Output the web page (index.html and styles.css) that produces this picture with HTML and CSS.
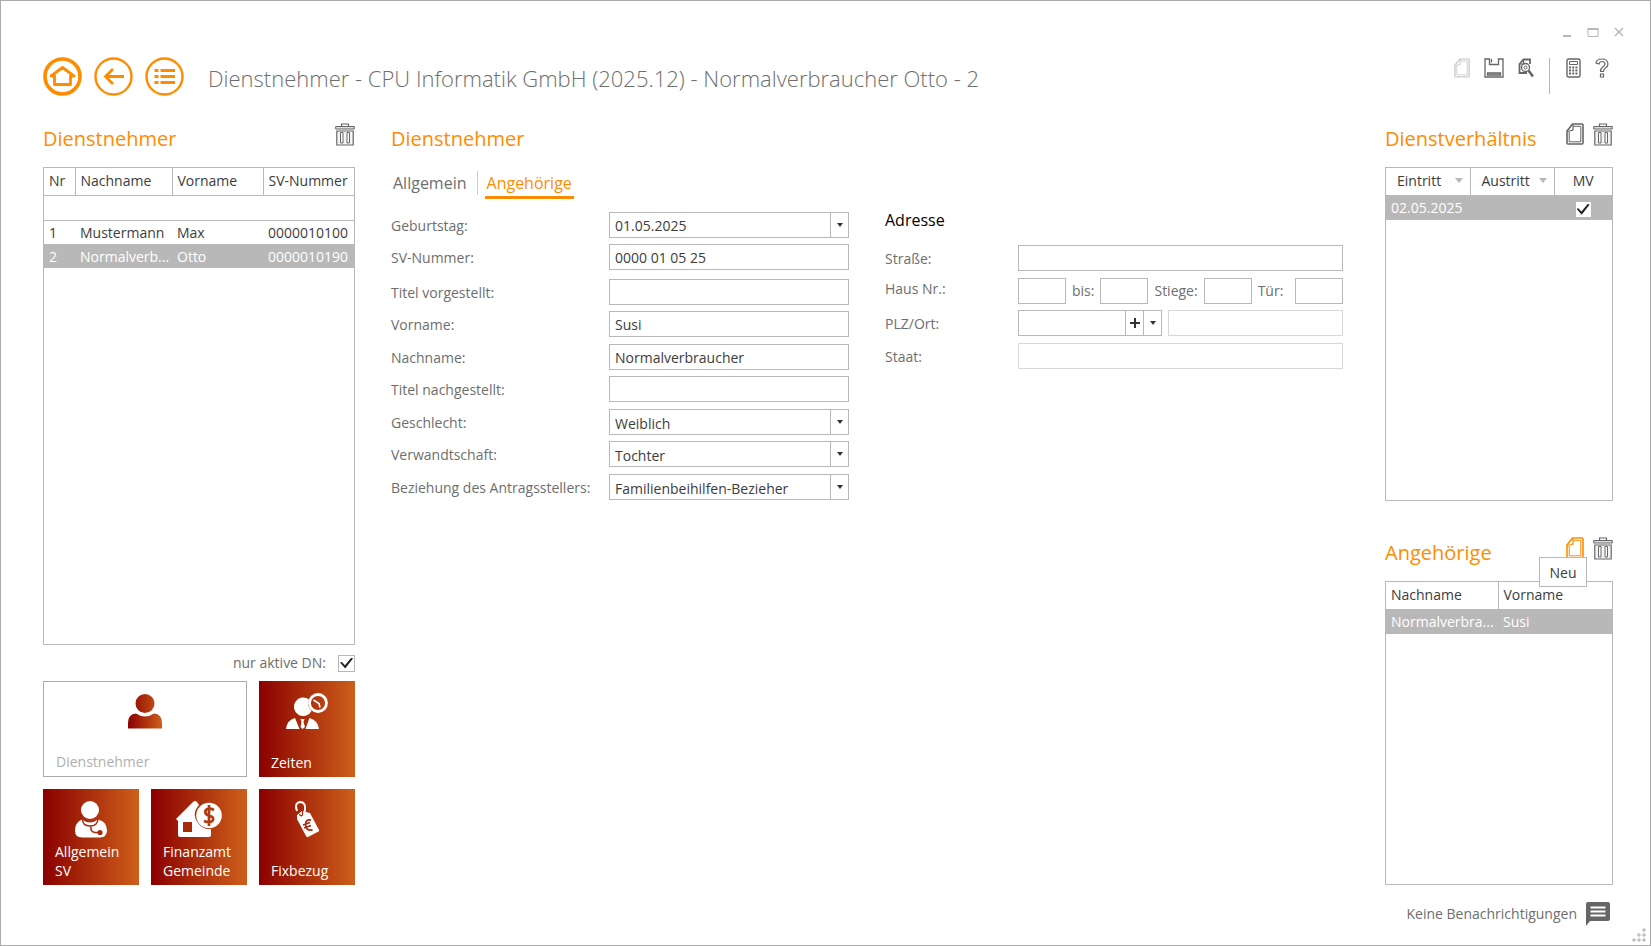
FILE: index.html
```html
<!DOCTYPE html>
<html lang="de">
<head>
<meta charset="utf-8">
<title>Dienstnehmer - CPU Informatik GmbH</title>
<link rel="stylesheet" href="styles.css">
</head>
<body>
<svg class="defs" aria-hidden="true">
  <defs>
    <linearGradient id="brand" x1="0" x2="1" y1="0" y2="0"><stop offset="0" stop-color="#8b0000"/><stop offset="1" stop-color="#cd5f1a"/></linearGradient>
    <symbol id="trash" viewBox="0 0 20 23">
      <g fill="none" stroke="currentColor"><path d="M6.500 3V1h7v2" stroke-width="1.200"/><path d="M.7 3.500h18.600v2.500H.7z" fill="#ddd"/><path d="M1.800 8h16.400v14H1.800z" fill="#f4f4f4" stroke-width="1.200"/><path d="M5.500 9.500h2.500v10.500H5.500zM12 9.500h2.500v10.500h-2.500z" fill="#fff"/></g>
    </symbol>
    <symbol id="page" viewBox="0 0 18 22">
      <path d="M6.500 1H16q1 0 1 1v18q0 1-1 1H2q-1 0-1-1V8z" fill="none" stroke="currentColor" stroke-width="1.600"/>
      <path d="M7 3.300h7.800v15.500H3.200V9" fill="none" stroke="currentColor" stroke-width="1"/><path d="M7 1.500V7L1.500 8.500" fill="none" stroke="currentColor" stroke-width="1.200"/>
    </symbol>
  </defs>
</svg>
<div class="window">
  <div class="caption">
    <button aria-label="Minimieren"><svg width="10" height="14"><path d="M1 11h8" stroke="#b8b8b8" stroke-width="2"/></svg></button>
    <button aria-label="Maximieren"><svg width="12" height="14"><path d="M1 3.500h10v8H1z" fill="none" stroke="#b8b8b8"/><path d="M.5 4h11" stroke="#b8b8b8" stroke-width="2"/></svg></button>
    <button aria-label="Schließen"><svg width="10" height="14"><path d="M1 3l8 8M9 3l-8 8" stroke="#b8b8b8" stroke-width="1.500"/></svg></button>
  </div>
  <header class="topbar">
    <nav class="nav">
      <button aria-label="Start"><svg width="39" height="39" fill="none" stroke="#ff8c00"><circle cx="19.500" cy="19.500" r="17.500" stroke-width="3.600"/><path d="M8 19l11.500-8.500L31 19h-3.500v8.500h-16V19z" stroke-width="2.800" stroke-linejoin="round"/></svg></button>
      <button aria-label="Zurück"><svg width="39" height="39" fill="none" stroke="#ff8c00"><circle cx="19.500" cy="19.500" r="18" stroke-width="2.400"/><path d="M30 19.500H12M19 12l-7.500 7.500L19 27" stroke-width="2.800"/></svg></button>
      <button aria-label="Liste"><svg width="39" height="39" fill="none" stroke="#ff8c00"><circle cx="19.500" cy="19.500" r="18" stroke-width="2.400"/><path d="M9.500 13.500h4m2 0H30M9.500 19.500h4m2 0H30M9.500 25.500h4m2 0H30" stroke-width="2.800"/></svg></button>
    </nav>
    <h1>Dienstnehmer - CPU Informatik GmbH (2025.12) - Normalverbraucher Otto - 2</h1>
    <div class="tools">
      <button class="pale" aria-label="Neu" disabled><svg width="16" height="20"><use href="#page"/></svg></button>
      <button aria-label="Speichern"><svg width="20" height="20" fill="none" stroke="currentColor" stroke-width="1.300"><path d="M1 1h4.500v5.500h9V1H19v18H1z"/><path d="M7.500 1v3.500M3.500 15h13v2h-13z" fill="#ccc"/></svg></button>
      <button aria-label="Vorschau"><svg width="16" height="20" fill="none" stroke="currentColor"><path d="M9 15H1.500V6L5.500 1.500H12V6" stroke-width="1.800"/><path d="M5.500 1.500V6H1.500" stroke-width="1.200"/><circle cx="7.500" cy="9.500" r="4" stroke-width="1.300"/><circle cx="7.500" cy="9.500" r="1.500"/><path d="M10.500 12.500l4.500 6" stroke-width="2.600"/></svg></button>
      <span class="rule"></span>
      <button aria-label="Rechner"><svg width="15" height="20" fill="none" stroke="currentColor"><rect x="1" y="1" width="13" height="18" rx="1.500" stroke-width="1.400"/><path d="M3.500 3.500h8v3h-8z"/><path d="M3 9.500h9M3 12.500h9M3 15.500h9" stroke-width="2" stroke-dasharray="2 1.200"/></svg></button>
      <button aria-label="Hilfe"><svg width="14" height="20" fill="none" stroke="currentColor" stroke-width="1.200"><path d="M1 5Q1.500 1 7 1t6 5q0 2.500-3 4.500-1.500 1-1.500 3h-3q0-3 2.500-4.800Q10 7.500 10 6q0-2.500-3-2.500-2.500 0-3 2.500zM5.500 16h3v3h-3z"/></svg></button>
    </div>
  </header>
  <main class="columns">
    <section class="left">
      <div class="head"><h2>Dienstnehmer</h2><button class="icon" aria-label="Löschen"><svg width="20" height="23"><use href="#trash"/></svg></button></div>
      <div class="grid staff">
        <table>
          <colgroup><col class="nr"><col class="nach"><col class="vor"><col></colgroup>
          <thead><tr><th>Nr</th><th>Nachname</th><th>Vorname</th><th>SV-Nummer</th></tr></thead>
          <tbody><tr class="filter"><td colspan="4"></td></tr>
          <tr><td>1</td><td>Mustermann</td><td>Max</td><td>0000010100</td></tr>
          <tr class="selected"><td>2</td><td>Normalverb...</td><td>Otto</td><td>0000010190</td></tr></tbody>
        </table>
      </div>
      <div class="active"><label for="aktiv">nur aktive DN:</label><input class="check" type="checkbox" id="aktiv" checked></div>
      <div class="tiles">
        <button class="tile wide"><svg width="34" height="35" fill="url(#brand)"><path d="M17 0a9.500 9.500 0 0 1 0 19a9.500 9.500 0 0 1 0-19zM0 34.500V29q0-9 8-9.500 9 6 18 0 8 .5 8 9.500v5.500z"/></svg><span>Dienstnehmer</span></button>
        <button class="tile"><svg width="42" height="37" fill="#fff"><path d="M23 6.500A9.300 9.300 0 1 0 25.500 18A11 11 0 0 1 23 6.500z"/><circle cx="32" cy="10" r="8.500" fill="none" stroke="#fff" stroke-width="2.800"/><path d="M27.500 7l5.500 3.500 1 4" fill="none" stroke="#fff" stroke-width="1.600"/><path d="M0 36q1-9 9-11l4.500 11zM23.500 25q8 2 9.500 11H19.500zM14.500 26h4l-1 3 1.500 5-2.500 2-2-2 1-5z"/></svg><span>Zeiten</span></button>
        <button class="tile"><svg width="34" height="37" fill="#fff"><circle cx="16" cy="9" r="9"/><path d="M8 18.500q8 6 16 0 9 2 9 11 0 6.500-7 7H8q-7 0-7-7 0-8 7-11z"/><path d="M8.500 18q0 7 7.500 7t8-7M17 25q-1 6 4 6.500h4" fill="none" stroke="#a52b0c" stroke-width="1.500"/><circle cx="26" cy="31.500" r="2.600" fill="#a52b0c"/></svg><span>Allgemein<br>SV</span></button>
        <button class="tile"><svg width="46" height="37" fill="#fff"><path d="M0 18L17 1q2-2 4 0l2 3q-8 9-1 18 5 7 13 6v6q0 2-2 2H4q-2 0-2-2V20z"/><path d="M7 21h9v10H7z" fill="#a52b0c"/><circle cx="33" cy="14.500" r="12.800"/><path d="M38 9q-4-2-7-1-3 2-1 5 1 1 4 2 4 1 3 4-2 4-9 1M33 4v21" fill="none" stroke="#b13a0f" stroke-width="2.700"/></svg><span>Finanzamt<br>Gemeinde</span></button>
        <button class="tile"><svg width="28" height="37"><path d="M4 10Q1 2 7 1q6 0 5 8-1 5-4 5" fill="none" stroke="#fff" stroke-width="2"/><path d="M4 14l5-4 8 2 9 17q.5 1-.5 1.500L15 36q-1.500.5-2-1L4 18z" fill="#fff"/><path d="M6.500 13q1 3 3 1V10" fill="none" stroke="#a52b0c" stroke-width="1.200"/><path d="M18 19q-5-1-5.500 4 0 7 7 6M10 24l7-2.500M11 27l7-2.500" fill="none" stroke="#a52b0c" stroke-width="1.800"/></svg><span>Fixbezug</span></button>
      </div>
    </section>
    <section class="center">
      <div class="head"><h2>Dienstnehmer</h2></div>
      <div class="tabs"><button>Allgemein</button><button class="current">Angehörige</button></div>
      <form class="forms">
        <div class="person">
          <div class="field"><label for="geb">Geburtstag:</label><div class="combo"><input id="geb" type="text" value="01.05.2025"><button type="button" class="drop" aria-label="Kalender"></button></div></div>
          <div class="field last-id"><label for="sv">SV-Nummer:</label><input id="sv" type="text" value="0000 01 05 25"></div>
          <div class="field"><label for="tv">Titel vorgestellt:</label><input id="tv" type="text"></div>
          <div class="field"><label for="vn">Vorname:</label><input id="vn" type="text" value="Susi"></div>
          <div class="field"><label for="nn">Nachname:</label><input id="nn" type="text" value="Normalverbraucher"></div>
          <div class="field"><label for="tn">Titel nachgestellt:</label><input id="tn" type="text"></div>
          <div class="field"><label for="ge">Geschlecht:</label><div class="combo"><select id="ge"><option>Weiblich</option></select><i class="drop"></i></div></div>
          <div class="field"><label for="ve">Verwandtschaft:</label><div class="combo"><select id="ve"><option>Tochter</option></select><i class="drop"></i></div></div>
          <div class="field"><label for="be">Beziehung des Antragsstellers:</label><div class="combo"><select id="be"><option>Familienbeihilfen-Bezieher</option></select><i class="drop"></i></div></div>
        </div>
        <div class="address">
          <h3>Adresse</h3>
          <div class="field"><label for="st">Straße:</label><input id="st" type="text"></div>
          <div class="field house"><label for="hn">Haus Nr.:</label><div class="numbers"><input id="hn" type="text"><label for="bis">bis:</label><input id="bis" type="text"><label for="sg">Stiege:</label><input id="sg" type="text"><label for="tu" class="door">Tür:</label><input id="tu" type="text"></div></div>
          <div class="field"><label for="plz">PLZ/Ort:</label><div class="place"><div class="combo"><input id="plz" type="text"><button type="button" class="plus" aria-label="Hinzufügen"><svg width="10" height="10"><path d="M0 5h10M5 0v10" stroke="#333" stroke-width="2"/></svg></button><button type="button" class="drop" aria-label="Auswählen"></button></div><input type="text" aria-label="Ort" disabled></div></div>
          <div class="field"><label for="sa">Staat:</label><input id="sa" type="text" disabled></div>
        </div>
      </form>
    </section>
    <aside class="right">
      <div class="head"><h2>Dienstverhältnis</h2><div class="actions"><button class="icon" aria-label="Neu"><svg width="18" height="22"><use href="#page"/></svg></button><button class="icon" aria-label="Löschen"><svg width="20" height="23"><use href="#trash"/></svg></button></div></div>
      <div class="grid jobs">
        <table>
          <colgroup><col class="date"><col class="date"><col></colgroup>
          <thead><tr><th class="sort">Eintritt<i></i></th><th class="sort">Austritt<i></i></th><th class="mid">MV</th></tr></thead>
          <tbody><tr class="selected"><td>02.05.2025</td><td></td><td class="mid"><input class="check plain" type="checkbox" aria-label="MV" checked></td></tr></tbody>
        </table>
      </div>
      <div class="head"><h2>Angehörige</h2><div class="actions"><button class="icon hot" aria-label="Neu"><svg width="18" height="22"><use href="#page"/></svg></button><button class="icon" aria-label="Löschen"><svg width="20" height="23"><use href="#trash"/></svg></button><span class="tip" role="tooltip">Neu</span></div></div>
      <div class="grid family">
        <table>
          <colgroup><col class="half"><col></colgroup>
          <thead><tr><th>Nachname</th><th>Vorname</th></tr></thead>
          <tbody><tr class="selected"><td>Normalverbra...</td><td>Susi</td></tr></tbody>
        </table>
      </div>
    </aside>
  </main>
  <footer><span>Keine Benachrichtigungen</span><button aria-label="Benachrichtigungen"><svg width="24" height="24"><path d="M2 0h20q2 0 2 2v15q0 2-2 2H4l-4 5V2q0-2 2-2z" fill="#666"/><path d="M4.500 5.500h15M4.500 9.500h15M4.500 13.500h15" stroke="#fff" stroke-width="2"/></svg></button></footer>
  <svg class="grip" width="14" height="14"><path d="M10 2h4M12 0v4M5 7h4M7 5v4M10 7h4M12 5v4M0 12h4M2 10v4M5 12h4M7 10v4M10 12h4M12 10v4" stroke="#aaa"/></svg>
</div>
</body>
</html>
```

FILE: styles.css
```css
* { box-sizing: border-box; }
body { margin: 0; font: 14px/20px "Open Sans", "Noto Sans", sans-serif; color: #3c3c3c; background: #fff; }
button, input, select { font: inherit; color: inherit; }
button { border: 0; padding: 0; background: none; display: block; }
svg { display: block; }
h1, h2, h3 { margin: 0; font-weight: 400; }
.defs { position: absolute; width: 0; height: 0; }
.window { position: relative; min-height: 100vh; border: 1px solid #aaa; display: flex; flex-direction: column; }

.caption { display: flex; align-items: flex-start; justify-content: flex-end; gap: 15px; padding: 24px 26px 0 0; height: 54px; }
.topbar { display: flex; align-items: flex-start; padding: 2px 41px 0 42px; height: 64px; }
.nav { display: flex; gap: 12px; }
h1 { flex: 1; margin-left: 24px; font-size: 22px; line-height: 42px; font-weight: 300; color: #6e6e6e; white-space: nowrap; }
.tools { display: flex; align-items: flex-start; gap: 14px; padding-top: 1px; color: #666; }
.tools .pale { color: #ccc; }
.rule { width: 1px; height: 36px; margin: 0 2px 0 1px; background: #b8b8b8; }

.columns { flex: 1; display: grid; grid-template-columns: 312px minmax(0, 1fr) 228px; padding: 0 37px 0 42px; }
.left, .right { display: flex; flex-direction: column; }
.head { display: flex; justify-content: space-between; height: 48px; flex: none; }
h2 { font-size: 20px; line-height: 40px; color: #ff8c00; white-space: nowrap; }
.icon { color: #666; }
.icon.hot { color: #ff8c00; }
.actions { position: relative; display: flex; align-items: flex-start; gap: 9px; padding-top: 4px; }
.left .head > .icon { align-self: flex-start; padding-top: 4px; }

.grid { border: 1px solid #b8b8b8; }
.staff { flex: 1; }
.jobs { height: 334px; margin-bottom: 32px; }
.right .family { flex: 1; }
table { width: 100%; border-collapse: collapse; table-layout: fixed; }
.nr { width: 31px; }
.nach { width: 97px; }
.vor { width: 91px; }
.date { width: 84px; }
.half { width: 112px; }
th, td { padding: 0 5px; text-align: left; font-weight: 400; white-space: nowrap; overflow: hidden; }
th { height: 27px; border-bottom: 1px solid #b8b8b8; }
th + th { border-left: 1px solid #b8b8b8; }
td { height: 24px; padding-top: 2px; }
.filter td { height: 25px; border-bottom: 1px solid #b8b8b8; }
.selected { background: #b8b8b8; color: #fff; }
.right td { height: 25px; padding-top: 0; }
.mid { text-align: center; }
th.sort { padding-left: 11px; }
.sort i { float: right; margin: 7px 2px 0; border: 4px solid transparent; border-top: 5px solid #b8b8b8; border-bottom: 0; }
.tip { position: absolute; top: 24px; left: -27px; width: 48px; height: 30px; line-height: 30px; text-align: center; border: 1px solid #b8b8b8; background: #fff; }

.active { display: flex; justify-content: flex-end; align-items: center; gap: 12px; height: 36px; color: #6e6e6e; }
.check { appearance: none; margin: 0; width: 17px; height: 17px; border: 1px solid #b8b8b8; background: #fff; display: grid; place-items: center; }
.check.plain { width: 15px; height: 15px; border: 0; display: inline-grid; vertical-align: -2px; }
.check::before { content: ""; width: 13px; height: 11px; background: #222; clip-path: polygon(0 45%, 14% 40%, 38% 70%, 88% 0, 100% 8%, 40% 100%); }

.tiles { display: grid; grid-template-columns: repeat(3, 96px); grid-auto-rows: 96px; gap: 12px; }
.tile { display: flex; flex-direction: column; align-items: center; justify-content: space-between; padding: 12px 12px 5px; color: #fff; text-align: left; line-height: 19px; background: linear-gradient(90deg, #8b0000, #cd5f1a); }
.tile span { align-self: flex-start; }
.tile.wide { grid-column: span 2; background: #fff; border: 1px solid #aaa; color: #b0b0b0; }

.center { padding: 0 42px 0 36px; }
.center, .left { min-width: 0; }
.tabs { display: flex; height: 44px; font-size: 16px; line-height: 24px; color: #6e6e6e; }
.tabs button { height: 32px; padding: 2px 2px 0; }
.tabs button:first-child { height: 24px; padding-right: 10px; border-right: 1px solid #ccc; margin: 4px 7px 0 0; padding-top: 0; line-height: 22px; }
.tabs .current { color: #ff8c00; border-bottom: 3px solid #ff8c00; }
.forms { display: grid; grid-template-columns: 458px minmax(0, 1fr); column-gap: 36px; padding-top: 1px; color: #6e6e6e; }
.field { display: grid; grid-template-columns: 218px minmax(0, 1fr); margin-bottom: 6px; line-height: 27px; }
.field:nth-child(even) { margin-bottom: 7px; }
.person .last-id { margin-bottom: 9px; }
.address .field { grid-template-columns: 133px minmax(0, 1fr); }
input[type="text"], .combo { width: 100%; height: 26px; border: 1px solid #b8b8b8; padding: 0 5px; color: #3c3c3c; background: #fff; border-radius: 0; }
input[type="text"]:disabled { border-color: #d8d8d8; }
.field > * { height: 26px; }
.combo { display: flex; padding: 0; }
.combo input[type="text"] { flex: 1; min-width: 0; height: 24px; border: 0; }
.combo select { flex: 1; min-width: 0; appearance: none; border: 0; padding: 0 5px; background: none; }
.drop, .plus { width: 18px; flex: none; border-left: 1px solid #b8b8b8; display: grid; place-items: center; }
.drop { padding-bottom: 1px; }
.drop::before { content: ""; border: 3px solid transparent; border-top: 4px solid #333; border-bottom: 0; }
h3 { font-size: 16px; line-height: 16px; color: #000; margin-bottom: 17px; }
.numbers { display: flex; gap: 6px; align-items: center; line-height: 30px; }
.numbers input[type="text"] { width: 48px; }
.numbers .door { margin-right: auto; }
.house { line-height: 22px; }
.place { display: grid; grid-template-columns: 144px minmax(0, 1fr); gap: 6px; }

footer { display: flex; justify-content: flex-end; align-items: center; gap: 9px; height: 60px; padding: 0 40px 3px 0; color: #6e6e6e; }
.grip { position: absolute; right: 4px; bottom: 3px; }
```
